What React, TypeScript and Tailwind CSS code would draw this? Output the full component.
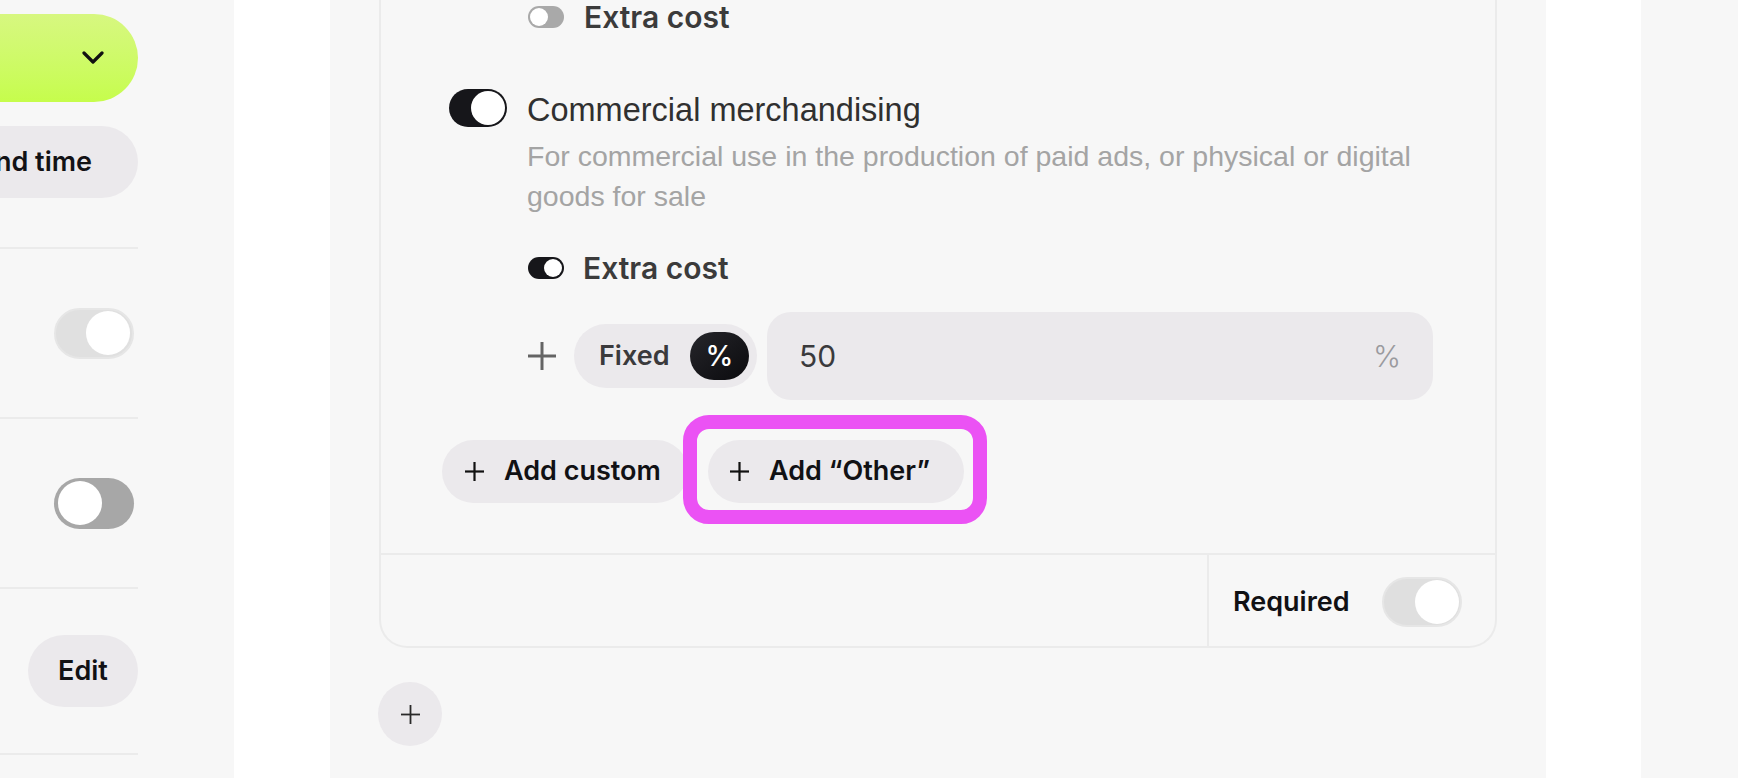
import React from "react";

const inter = "[font-family:Inter,'Noto_Sans',sans-serif]";
const lib = "[font-family:'Liberation_Sans',Arial,sans-serif]";

function Plus({ size, stroke, color }: { size: number; stroke: number; color: string }) {
  return (
    <svg width={size} height={size} viewBox={`0 0 ${size} ${size}`} fill="none">
      <line x1={size / 2} y1={0} x2={size / 2} y2={size} stroke={color} strokeWidth={stroke} />
      <line x1={0} y1={size / 2} x2={size} y2={size / 2} stroke={color} strokeWidth={stroke} />
    </svg>
  );
}

export default function App() {
  return (
    <div className={`flex h-[778px] w-[1738px] overflow-hidden bg-white ${inter}`}>
      {/* Left panel */}
      <div className="h-full w-[234px] shrink-0 overflow-hidden bg-[#f7f7f7]">
        <div className="ml-[-262px] flex w-[400px] flex-col pt-[14px]">
          <div className="flex h-[88px] items-center justify-end rounded-full bg-gradient-to-b from-[#d7f780] to-[#c6fd4b] pr-[34px]">
            <svg width="22" height="14" viewBox="0 0 22 14" fill="none">
              <polyline points="2,2 11,11 20,2" stroke="#111" strokeWidth="3.2" strokeLinecap="round" strokeLinejoin="round" />
            </svg>
          </div>
          <div className="mt-[24px] flex h-[72px] items-center justify-end rounded-full bg-[#ebe9ec] pr-[46px] text-[27px] font-semibold text-[#121215] whitespace-nowrap">
            Select date and time
          </div>
          <div className="mt-[49px] border-t-2 border-[#ebebeb]" />
          <div className="flex h-[170px] items-center justify-end border-b-2 border-[#ebebeb] pr-[4px]">
            <div className="flex h-[51px] w-[80px] items-center justify-end rounded-full border-2 border-[#e6e6e6] bg-[#e0e0e0] px-[2px]">
              <div className="h-[44px] w-[44px] rounded-full bg-white" />
            </div>
          </div>
          <div className="flex h-[170px] items-center justify-end border-b-2 border-[#ebebeb] pr-[4px]">
            <div className="flex h-[51px] w-[80px] items-center justify-start rounded-full bg-[#a7a7a7] px-[4px]">
              <div className="h-[44px] w-[44px] rounded-full bg-white" />
            </div>
          </div>
          <div className="flex h-[166px] items-center justify-end border-b-2 border-[#ebebeb]">
            <div className="flex h-[72px] w-[110px] items-center justify-center rounded-full bg-[#ebe9ec] text-[27px] font-semibold text-[#111114]">
              Edit
            </div>
          </div>
        </div>
      </div>

      {/* Middle panel */}
      <div className="ml-[96px] h-full w-[1216px] shrink-0 bg-[#f7f7f7] px-[49px]">
        <div className="rounded-b-[28px] border-2 border-t-0 border-[#ebebeb]">
          <div className="flex flex-col pl-[68px] pb-[50px]">
            {/* Extra cost off */}
            <div className="ml-[79px] flex h-[34px] items-center gap-[20px]">
              <div className="flex h-[22px] w-[36px] items-center justify-start rounded-full bg-[#a9a9a9] p-[2px]">
                <div className="h-[18px] w-[18px] rounded-full bg-white" />
              </div>
              <span className="text-[30px] font-semibold leading-none text-[#3b3b3b]">Extra cost</span>
            </div>

            {/* Commercial merchandising */}
            <div className="mt-[55px] flex items-start gap-[20px]">
              <div className="flex h-[38px] w-[58px] shrink-0 items-center justify-end rounded-full bg-[#16161a] p-[2px]">
                <div className="h-[34px] w-[34px] rounded-full bg-white" />
              </div>
              <div className="flex flex-col">
                <div className={`h-[38px] text-[32.5px] leading-[42px] text-[#303030] ${lib}`}>Commercial merchandising</div>
                <div className={`mt-[9px] w-[910px] text-[28.5px] leading-[40px] text-[#a4a4a4] ${lib}`}>
                  For commercial use in the production of paid ads, or physical or digital goods for sale
                </div>
              </div>
            </div>

            {/* Extra cost on */}
            <div className="mt-[35px] ml-[79px] flex h-[34px] items-center gap-[19px]">
              <div className="flex h-[22px] w-[36px] items-center justify-end rounded-full bg-[#16161a] p-[2px]">
                <div className="h-[18px] w-[18px] rounded-full bg-white" />
              </div>
              <span className="text-[30px] font-semibold leading-none text-[#3b3b3b]">Extra cost</span>
            </div>

            {/* Fixed / % / input */}
            <div className="mt-[27px] ml-[79px] flex h-[88px] items-center">
              <Plus size={28} stroke={3} color="#646464" />
              <div className="ml-[18px] flex h-[64px] w-[183px] items-center justify-between rounded-full bg-[#ebe9ec] pl-[25px] pr-[8px]">
                <span className="text-[27px] font-semibold text-[#3a3a3c]">Fixed</span>
                <div className="flex h-[48px] w-[59px] items-center justify-center rounded-full bg-gradient-to-br from-[#26262b] to-[#0b0b0e] text-[28px] font-medium text-white">
                  %
                </div>
              </div>
              <div className="ml-[10px] flex h-[88px] w-[666px] items-center justify-between rounded-[24px] bg-[#ebe9ec] px-[32px]">
                <span className="text-[30px] text-[#3a3a3c]">50</span>
                <span className="text-[30px] font-light text-[#9a9a9e]">%</span>
              </div>
            </div>

            {/* Add buttons */}
            <div className="mt-[40px] ml-[-7px] flex h-[63px] items-center gap-[20px]">
              <div className="flex h-[63px] w-[246px] items-center gap-[20px] rounded-full bg-[#ebe9ec] pl-[23px]">
                <Plus size={19} stroke={2.2} color="#111" />
                <span className="text-[27px] font-semibold text-[#111114] whitespace-nowrap">Add custom</span>
              </div>
              <div className="relative flex h-[63px] w-[256px] items-center gap-[20px] rounded-full bg-[#ebe9ec] pl-[22px]">
                <Plus size={19} stroke={2.2} color="#111" />
                <span className="text-[27px] font-semibold text-[#111114] whitespace-nowrap">Add “Other”</span>
                <div className="pointer-events-none absolute -left-[25px] -right-[23px] -top-[25px] -bottom-[21px] rounded-[26px] border-[14px] border-[#eb52f4]" />
              </div>
            </div>
          </div>

          {/* Footer */}
          <div className="flex h-[93px] border-t-2 border-[#ebebeb]">
            <div className="flex-1" />
            <div className="flex w-[288px] items-center justify-between border-l-2 border-[#ebebeb] pl-[24px] pr-[33px] pt-[3px]">
              <span className="text-[27px] font-semibold text-[#111114]">Required</span>
              <div className="flex h-[50px] w-[80px] items-center justify-end rounded-full border-2 border-[#e6e6e6] bg-[#dfdfdf] px-[1px]">
                <div className="h-[44px] w-[44px] rounded-full bg-white" />
              </div>
            </div>
          </div>
        </div>

        <div className="mt-[34px] -ml-[1px] flex h-[64px] w-[64px] items-center justify-center rounded-full bg-[#ebe9ec]">
          <Plus size={19} stroke={1.8} color="#2a2a2a" />
        </div>
      </div>

      {/* Right panel */}
      <div className="ml-[95px] h-full flex-1 bg-[#f7f7f7]" />
    </div>
  );
}
